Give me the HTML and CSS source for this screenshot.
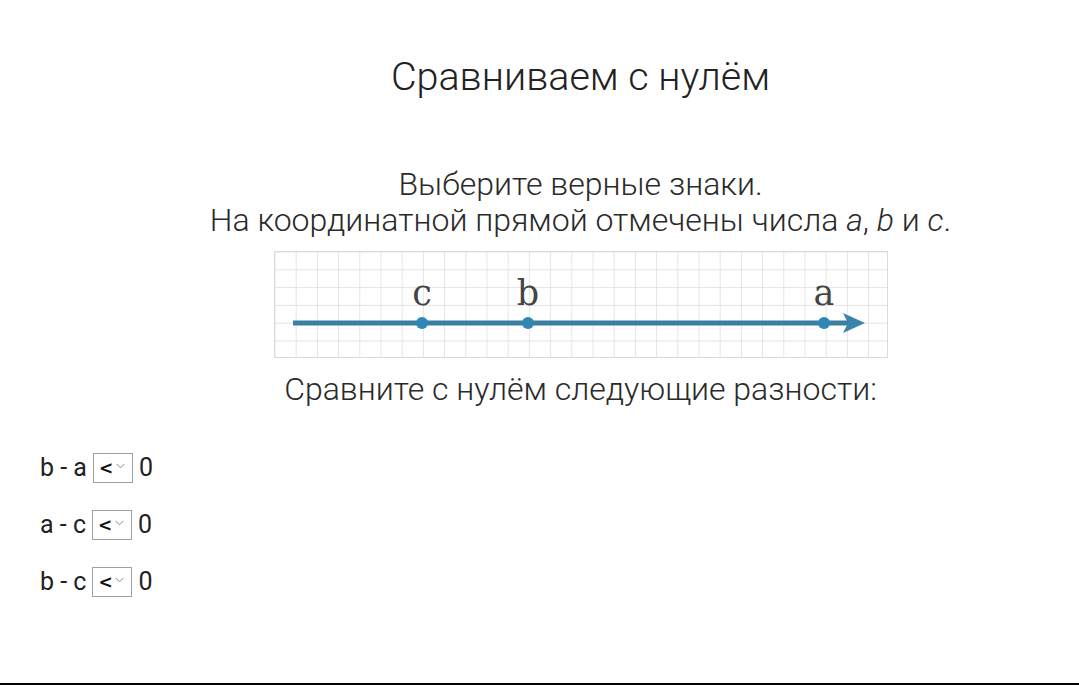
FILE: index.html
```html
<!DOCTYPE html>
<html lang="ru">
<head>
    <meta charset="UTF-8">
    <meta name="viewport" content="width=device-width, initial-scale=1.0">
    <title>Сравниваем с нулём</title>
    <link rel="stylesheet" href="styles.css">
</head>
<body>

    <div class="page">
        <div class="task">
            <h1 class="task-title">Сравниваем с нулём</h1>

            <p class="task-text">
                Выберите верные знаки.<br>
                На координатной прямой отмечены числа <i>a</i>, <i>b</i> и <i>c</i>.
            </p>

            <div class="number-line">
                <svg width="614" height="107" viewBox="0 0 614 107">
                    <defs>
                        <pattern id="cells" width="21.2" height="17.8" patternUnits="userSpaceOnUse" x="0.5" y="0.5">
                            <path d="M 21.2 0 L 0 0 0 17.8" fill="none" stroke="#dadada" stroke-width="1.4"/>
                        </pattern>
                    </defs>
                    <rect x="0" y="0" width="614" height="107" fill="url(#cells)"/>
                    <rect x="0.5" y="0.5" width="613" height="106" fill="none" stroke="#dadada"/>

                    <!-- ось -->
                    <line x1="19" y1="72" x2="574" y2="72" stroke="#3a7ea2" stroke-width="5"/>
                    <path d="M 569 62 L 591 72 L 569 82 L 574 72 Z" fill="#3a84ab"/>

                    <!-- точки -->
                    <circle cx="148" cy="72" r="6" fill="#2f87b5"/>
                    <circle cx="254" cy="72" r="6" fill="#2f87b5"/>
                    <circle cx="550" cy="72" r="6" fill="#2f87b5"/>

                    <g class="point-label">
                        <text x="148" y="54">c</text>
                        <text x="254" y="54">b</text>
                        <text x="550" y="54">a</text>
                    </g>
                </svg>
            </div>

            <p class="task-text">Сравните с нулём следующие разности:</p>
        </div>

        <div class="answers">
            <div class="answer-row">
                <span>b - a</span>
                <label class="sign-select">
                    <select>
                        <option selected>&lt;</option>
                        <option>&gt;</option>
                    </select>
                    <svg class="chevron" width="9" height="6" viewBox="0 0 9 6"><path d="M 0.5 0.8 L 4.5 4.8 L 8.5 0.8" fill="none" stroke="#8a8a8a" stroke-width="1"/></svg>
                </label>
                <span>0</span>
            </div>
            <div class="answer-row">
                <span>a - c</span>
                <label class="sign-select">
                    <select>
                        <option selected>&lt;</option>
                        <option>&gt;</option>
                    </select>
                    <svg class="chevron" width="9" height="6" viewBox="0 0 9 6"><path d="M 0.5 0.8 L 4.5 4.8 L 8.5 0.8" fill="none" stroke="#8a8a8a" stroke-width="1"/></svg>
                </label>
                <span>0</span>
            </div>
            <div class="answer-row">
                <span>b - c</span>
                <label class="sign-select">
                    <select>
                        <option selected>&lt;</option>
                        <option>&gt;</option>
                    </select>
                    <svg class="chevron" width="9" height="6" viewBox="0 0 9 6"><path d="M 0.5 0.8 L 4.5 4.8 L 8.5 0.8" fill="none" stroke="#8a8a8a" stroke-width="1"/></svg>
                </label>
                <span>0</span>
            </div>
        </div>
    </div>

</body>
</html>
```

FILE: styles.css
```css
body {
    margin: 0;
    font-family: Roboto, "Noto Sans", sans-serif;
    color: #222;
    background: #fff;
}

.page {
    box-sizing: border-box;
    min-height: 685px;
    border-bottom: 2px solid #000;
}

.task {
    padding-left: 82px;
    text-align: center;
}

.task-title {
    margin: 0;
    padding-top: 54px;
    font-size: 39.5px;
    font-weight: 300;
    line-height: 46px;
    color: #222;
}

.task-text {
    margin: 0;
    font-size: 32px;
    font-weight: 300;
    line-height: 36px;
    color: #2a2a2a;
}

.task-title + .task-text {
    margin-top: 66px;
}

.number-line {
    display: flex;
    justify-content: center;
    margin: 13px 0 13px;
}

.number-line svg {
    display: block;
}

.point-label text {
    font-family: "DejaVu Serif", "Liberation Serif", serif;
    font-size: 35px;
    fill: #444;
    text-anchor: middle;
}

.answers {
    display: flex;
    flex-direction: column;
    gap: 27px;
    padding: 45px 0 0 40px;
}

.answer-row {
    display: flex;
    align-items: center;
    gap: 6px;
    height: 30px;
    font-size: 25px;
    color: #222;
}

.sign-select {
    position: relative;
    display: block;
}

.sign-select select {
    appearance: none;
    -webkit-appearance: none;
    box-sizing: border-box;
    width: 40px;
    height: 30px;
    padding: 0 0 0 5px;
    border: 1px solid #a0a0a0;
    border-radius: 0;
    background: #fff;
    font-family: "DejaVu Sans", sans-serif;
    font-size: 17px;
    font-weight: 700;
    line-height: 28px;
    color: #111;
}

.sign-select .chevron {
    position: absolute;
    right: 8px;
    top: 12px;
    pointer-events: none;
}
```
